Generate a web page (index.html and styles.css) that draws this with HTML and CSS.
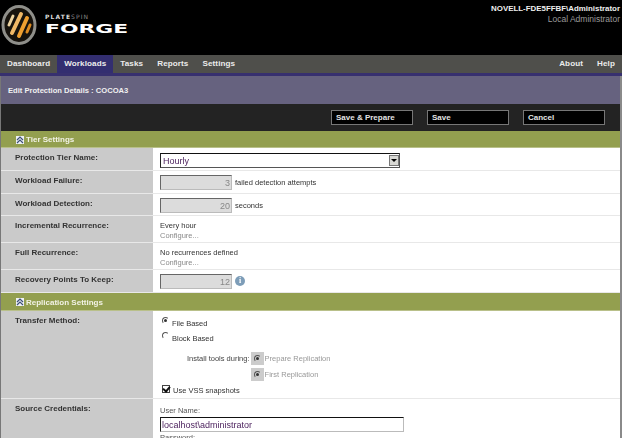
FILE: index.html
```html
<!DOCTYPE html>
<html lang="en">
  <head>
    <meta charset="UTF-8" />
    <meta name="viewport" content="width=device-width, initial-scale=1.0" />
    <title>Edit Protection Details</title>
    <link rel="stylesheet" href="styles.css">
  </head>
  <body>
    <header class="top">
      <div class="brand">
        <svg class="logo" width="38" height="42" viewBox="0 0 38 42">
          <ellipse cx="19" cy="21" rx="16" ry="18.5" fill="#16120c" stroke="#8f8f8a" stroke-width="3"/>
          <g fill="none" stroke-linecap="round">
            <path d="M9 21 L13 12" stroke="#ecd3a0" stroke-width="3"/>
            <path d="M12 29 L21 10" stroke="#f0b866" stroke-width="4"/>
            <path d="M19 32 L27 14" stroke="#ef9f30" stroke-width="4"/>
            <path d="M27 28 L30 21" stroke="#dd8a20" stroke-width="3"/>
          </g>
        </svg>
        <div class="wordmark">
          <span class="plate">PLATE<em>SPIN</em></span>
          <span class="forge">FORGE</span>
        </div>
      </div>
      <div class="user">
        <strong>NOVELL-FDE5FFBF\Administrator</strong>
        <span>Local Administrator</span>
      </div>
    </header>

    <nav class="nav">
      <a href="#">Dashboard</a>
      <a href="#" class="active">Workloads</a>
      <a href="#">Tasks</a>
      <a href="#">Reports</a>
      <a href="#">Settings</a>
      <a href="#" class="push">About</a>
      <a href="#">Help</a>
    </nav>

    <main class="page">
      <div class="title">Edit Protection Details : COCOA3</div>

      <div class="toolbar">
        <button class="btn">Save &amp; Prepare</button>
        <button class="btn">Save</button>
        <button class="btn">Cancel</button>
      </div>

      <h2 class="section">
        <svg class="chev" width="8" height="8" viewBox="0 0 8 8">
          <rect width="8" height="8" fill="#eef1f4"/>
          <path d="M1 4 L4 1 L7 4 M1 7 L4 4 L7 7" fill="none" stroke="#3d4f78" stroke-width="1.2"/>
        </svg>
        Tier Settings
      </h2>

      <div class="row h23">
        <div class="label">Protection Tier Name:</div>
        <div class="field">
          <div class="select">Hourly<span class="arrow"></span></div>
        </div>
      </div>
      <div class="row h23">
        <div class="label">Workload Failure:</div>
        <div class="field inline">
          <input class="num" type="text" value="3" disabled />
          <span>failed detection attempts</span>
        </div>
      </div>
      <div class="row h22">
        <div class="label">Workload Detection:</div>
        <div class="field inline">
          <input class="num" type="text" value="20" disabled />
          <span>seconds</span>
        </div>
      </div>
      <div class="row h27">
        <div class="label">Incremental Recurrence:</div>
        <div class="field stack">
          <span>Every hour</span>
          <a href="#">Configure...</a>
        </div>
      </div>
      <div class="row h27">
        <div class="label">Full Recurrence:</div>
        <div class="field stack">
          <span>No recurrences defined</span>
          <a href="#">Configure...</a>
        </div>
      </div>
      <div class="row h23">
        <div class="label">Recovery Points To Keep:</div>
        <div class="field inline">
          <input class="num" type="text" value="12" disabled />
          <span class="info">i</span>
        </div>
      </div>

      <h2 class="section tall">
        <svg class="chev" width="8" height="8" viewBox="0 0 8 8">
          <rect width="8" height="8" fill="#eef1f4"/>
          <path d="M1 4 L4 1 L7 4 M1 7 L4 4 L7 7" fill="none" stroke="#3d4f78" stroke-width="1.2"/>
        </svg>
        Replication Settings
      </h2>

      <div class="row transfer">
        <div class="label">Transfer Method:</div>
        <div class="field options">
          <label class="opt first"><i class="radio on"></i>File Based</label>
          <label class="opt"><i class="radio"></i>Block Based</label>
          <div class="install">
            <span>Install tools during:</span>
            <div class="phases">
              <label class="opt off"><span class="box"><i class="radio on"></i></span>Prepare Replication</label>
              <label class="opt off"><span class="box"><i class="radio on"></i></span>First Replication</label>
            </div>
          </div>
          <label class="opt"><i class="check"></i>Use VSS snapshots</label>
        </div>
      </div>
      <div class="row creds">
        <div class="label">Source Credentials:</div>
        <div class="field">
          <div class="cap">User Name:</div>
          <input class="text" type="text" value="localhost\administrator" />
          <div class="cap">Password:</div>
        </div>
      </div>
    </main>
  </body>
</html>
```

FILE: styles.css
```css
* {
  padding: 0;
  margin: 0;
  box-sizing: border-box;
}

html,
body {
  height: 438px;
  overflow: hidden;
}

body {
  font-family: "Liberation Sans", sans-serif;
  font-size: 7.5px;
  color: #333;
  background: #fff;
}

/* keeps the text on grey antialiasing, the shot has no colour fringes */
.top,
.nav,
.page {
  opacity: 0.999;
}

.top {
  height: 55px;
  background: #000;
  display: flex;
  justify-content: space-between;
}

.brand {
  display: flex;
  align-items: flex-start;
}

.logo {
  margin-top: 4px;
  flex-shrink: 0;
}

.wordmark {
  display: flex;
  flex-direction: column;
  margin: 13px 0 0 7px;
  color: #fff;
}

.plate {
  font: bold 6px/7px "DejaVu Sans", sans-serif;
  letter-spacing: 1.1px;
  color: #ddd;
}

.plate em {
  font-style: normal;
  font-weight: normal;
  color: #888;
}

.forge {
  margin-top: 2px;
  font: bold 13px/13px "DejaVu Sans", sans-serif;
  transform: scaleX(1.68);
  transform-origin: left;
}

.user {
  padding: 4px 2px 0 0;
  display: flex;
  flex-direction: column;
  align-items: flex-end;
  font-size: 8.5px;
  line-height: 10px;
  color: #9a9a9a;
}

.user strong {
  font-size: 7.9px;
  color: #eee;
}

.nav {
  height: 21px;
  background: #4f4f4b;
  border-bottom: 3px solid #37306f;
  display: flex;
  font-size: 8.1px;
  font-weight: bold;
  letter-spacing: 0.1px;
  line-height: 18px;
}

.nav a {
  color: #ececec;
  text-decoration: none;
  padding: 0 7px;
}

.nav .active {
  background: #332e70;
}

.nav .push {
  margin-left: auto;
}

.page {
  border-left: 1px solid #777;
  border-right: 2px solid #8a8a8a;
}

.title {
  height: 28px;
  background: #66627f;
  color: #f0f0f0;
  font-size: 7.6px;
  font-weight: bold;
  line-height: 29px;
  padding-left: 7px;
}

.toolbar {
  height: 27px;
  background: #232323;
  display: flex;
  justify-content: flex-end;
  align-items: center;
  gap: 14px;
  padding-right: 15px;
}

.btn {
  width: 82px;
  height: 15px;
  background: #000;
  border: 1px solid #777;
  color: #e4e4e4;
  font: bold 8px "Liberation Sans", sans-serif;
  text-align: left;
  padding-left: 4px;
}

.section {
  height: 17px;
  background: #939f4f;
  border-bottom: 1px solid #b9c08a;
  color: #f2f2e6;
  font-size: 8px;
  font-weight: bold;
  padding: 1px 0 0 15px;
  display: flex;
  align-items: center;
  gap: 2px;
}

.tall {
  height: 18px;
}

.chev {
  flex-shrink: 0;
}

.row {
  display: flex;
  border-bottom: 1px solid #e8e8e8;
}

.h22 { height: 22px; }
.h23 { height: 23px; }
.h27 { height: 27px; }
.transfer { height: 88px; }
.creds { height: 60px; }

.label {
  width: 152px;
  flex-shrink: 0;
  background: #cacaca;
  padding: 5px 0 0 14px;
  font-size: 8px;
  font-weight: bold;
  line-height: 10px;
}

.field {
  flex: 1;
  padding: 5px 0 0 7px;
}

.inline {
  display: flex;
  align-items: flex-start;
  gap: 3px;
  padding-top: 4px;
  line-height: 16px;
}

.stack {
  display: flex;
  flex-direction: column;
  line-height: 10px;
}

.stack a {
  color: #8a8a8a;
  text-decoration: none;
}

.select {
  position: relative;
  width: 240px;
  height: 15px;
  border: 1px solid #555;
  border-top-color: #111;
  border-left-color: #222;
  color: #4a1f5c;
  font-size: 9px;
  line-height: 14px;
  padding-left: 2px;
}

.arrow {
  position: absolute;
  right: 0;
  top: 1px;
  width: 10px;
  height: 11px;
  background: #d8d8d4;
  border: 1px solid #777;
}

.arrow::after {
  content: "";
  position: absolute;
  left: 1px;
  top: 3px;
  border: 3px solid transparent;
  border-top: 3px solid #000;
  border-bottom: 0;
}

.num {
  width: 72px;
  height: 15px;
  background: #dcdcdc;
  border: 1px solid #bbb;
  border-top-color: #666;
  border-left-color: #666;
  text-align: right;
  color: #888;
  font: 9px "Liberation Sans", sans-serif;
  padding-right: 1px;
}

.info {
  width: 10px;
  height: 10px;
  margin-top: 2px;
  border-radius: 50%;
  background: #7d9db8;
  color: #fff;
  font: bold 8px/10px "Liberation Serif", serif;
  text-align: center;
}

.options {
  display: flex;
  flex-direction: column;
  padding-top: 4px;
}

.opt {
  display: flex;
  align-items: center;
  height: 17px;
  gap: 3px;
}

.first {
  height: 18px;
}

.install {
  display: flex;
  padding-left: 27px;
  align-items: flex-start;
  height: 33px;
  color: #444;
  margin-top: 4px;
}

.install > span {
  line-height: 16px;
  margin-right: 1px;
}

.phases {
  display: flex;
  flex-direction: column;
}

.phases .opt {
  height: 16px;
  gap: 1px;
}

.off {
  color: #999;
}

.box {
  width: 13px;
  height: 13px;
  background: #ccc;
  display: flex;
  align-items: center;
  justify-content: center;
}

.box .radio {
  margin: 0;
}

.radio {
  position: relative;
  width: 7px;
  height: 7px;
  border-radius: 50%;
  border: 1px solid transparent;
  border-top-color: #555;
  border-left-color: #555;
  margin: -6px 0 0 2px;
}

.radio.on::after {
  content: "";
  position: absolute;
  left: 1px;
  top: 1px;
  width: 3px;
  height: 3px;
  border-radius: 50%;
  background: #333;
}

.check {
  position: relative;
  width: 8px;
  height: 8px;
  border: 1px solid #444;
  margin: -3px 0 0 2px;
}

.check::after {
  content: "";
  position: absolute;
  left: 1px;
  top: -1px;
  width: 3px;
  height: 5px;
  border: solid #111;
  border-width: 0 2px 2px 0;
  transform: rotate(40deg);
}

.cap {
  line-height: 11px;
  color: #555;
}

.creds .field {
  padding-top: 6px;
}

.text {
  display: block;
  width: 244px;
  height: 15px;
  margin: 1px 0 0;
  border: 1px solid #bbb;
  border-top-color: #111;
  border-left-color: #222;
  color: #4a1f5c;
  font: 9px "Liberation Sans", sans-serif;
  padding-left: 1px;
}
```
